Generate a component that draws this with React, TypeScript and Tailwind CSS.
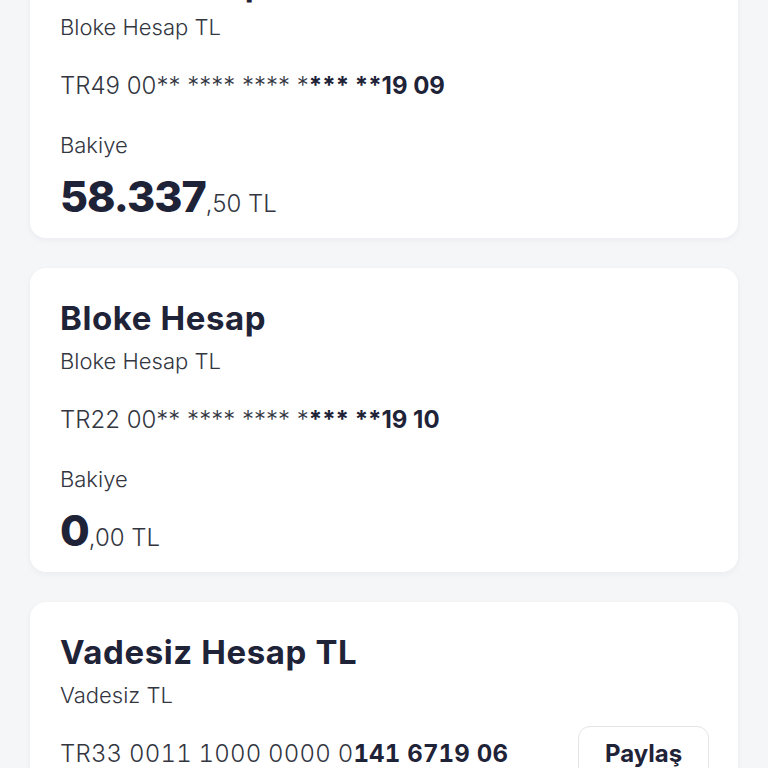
import React from 'react';

type Account = {
  title: string;
  sub: string;
  ibanPlain: string;
  ibanBold: string;
  whole?: string;
  cents?: string;
  share?: boolean;
};

const accounts: Account[] = [
  { title: 'Bloke Hesap', sub: 'Bloke Hesap TL', ibanPlain: 'TR49 00** **** **** *', ibanBold: '*** **19 09', whole: '58.337', cents: ',50 TL' },
  { title: 'Bloke Hesap', sub: 'Bloke Hesap TL', ibanPlain: 'TR22 00** **** **** *', ibanBold: '*** **19 10', whole: '0', cents: ',00 TL' },
  { title: 'Vadesiz Hesap TL', sub: 'Vadesiz TL', ibanPlain: 'TR33 0011 1000 0000 0', ibanBold: '141 6719 06', share: true },
];

function AccountCard({ a }: { a: Account }) {
  // masked IBANs keep proportional figures, the full one uses tabular digits
  const ibanCls = a.share
    ? 'text-[24px] leading-[32px] font-light tabular-nums tracking-[0.2px] text-[#33363f]'
    : 'text-[24px] leading-[32px] font-light text-[#33363f]';

  return (
    <div className="bg-white rounded-2xl shadow-[0_2px_6px_rgba(30,40,70,0.05)] pl-[30px] pr-[29px] pt-[30px] pb-[20px]">
      <h2 className="text-[33px] leading-[40px] font-bold tracking-[0.6px] text-[#1f2338]">{a.title}</h2>
      <p className="mt-2 text-[22px] leading-[30px] font-light text-[#33363f]">{a.sub}</p>
      <div className="mt-[28px] flex items-center justify-between">
        <p className={ibanCls}>
          {a.ibanPlain}
          <span className="font-bold text-[#1f2338]">{a.ibanBold}</span>
        </p>
        {a.share && (
          <button className="-my-[12px] h-[56px] w-[131px] rounded-xl border border-[#e3e4e8] bg-white text-[24px] font-bold text-[#1f2338]">
            Paylaş
          </button>
        )}
      </div>
      {a.whole && (
        <>
          <p className="mt-[28px] text-[22px] leading-[30px] font-light text-[#33363f]">Bakiye</p>
          <div className="mt-[14px] flex items-baseline h-[44px]">
            <span className="text-[43px] leading-[44px] font-extrabold tracking-[-1px] text-[#1f2338]">{a.whole}</span>
            <span className="text-[24px] leading-[44px] font-light text-[#33363f]">{a.cents}</span>
          </div>
        </>
      )}
    </div>
  );
}

export default function App() {
  return (
    <div className="h-[768px] overflow-hidden bg-[#f5f6f8] px-[30px]" style={{ fontFamily: 'Inter, "Open Sans", sans-serif' }}>
      <div className="mt-[-66px] flex flex-col gap-[30px]">
        {accounts.map((a, i) => (
          <AccountCard key={i} a={a} />
        ))}
      </div>
    </div>
  );
}
